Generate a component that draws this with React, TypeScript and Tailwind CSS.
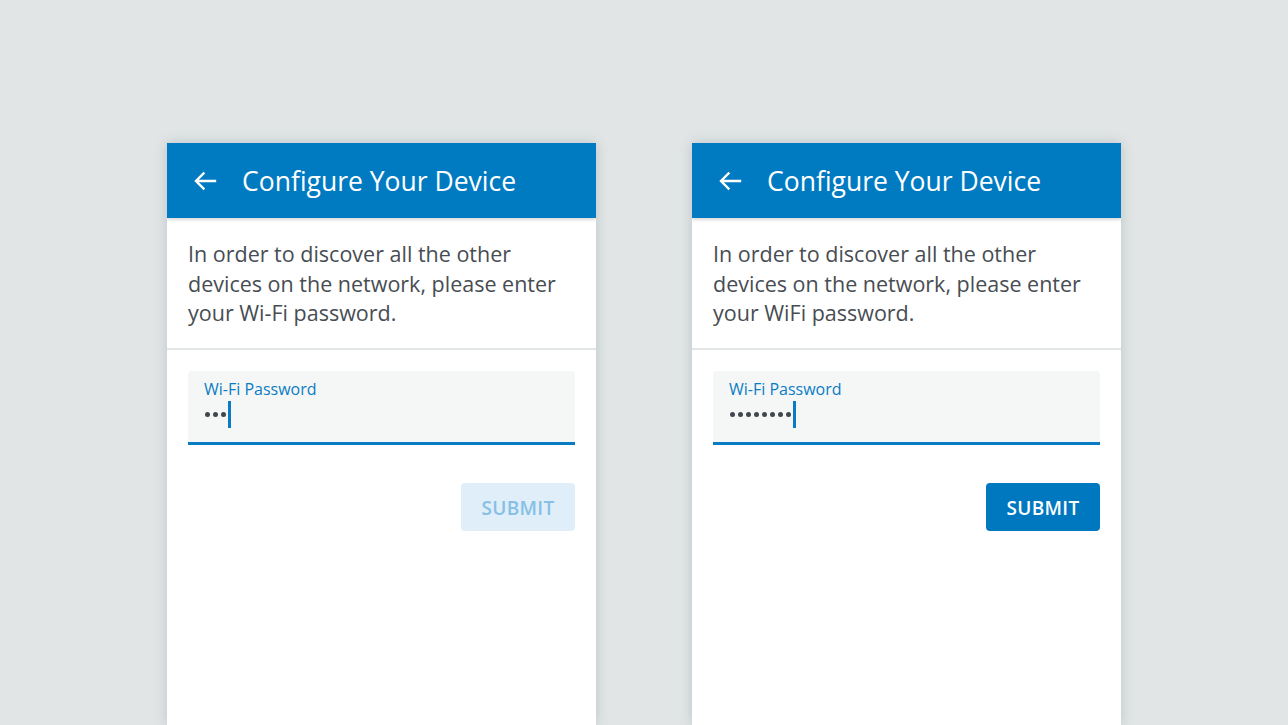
import React from 'react';

interface PhoneProps {
  body: string;
  dots: number;
  enabled: boolean;
}

const BackArrow: React.FC = () => (
  <svg width="24" height="20" viewBox="0 0 24 20" fill="none" className="shrink-0">
    <path d="M22 10H3.5M10.5 2.5L3 10l7.5 7.5" stroke="white" strokeWidth="2.4" strokeLinecap="square" />
  </svg>
);

const Phone: React.FC<PhoneProps> = ({ body, dots, enabled }) => {
  return (
    <div className="w-[429px] h-[582px] bg-white shadow-[0_0_12px_rgba(60,80,90,0.22)] flex flex-col overflow-hidden">
      <header className="h-[75px] bg-[#007bc2] flex items-center pl-[26px] shadow-[0_2px_3px_rgba(0,0,0,0.15)] relative z-10">
        <BackArrow />
        <h1 className="ml-[25px] pt-[2px] text-[26.5px] text-white">Configure Your Device</h1>
      </header>
      <div className="px-[21px] pt-[21px] pb-[20px] border-b-2 border-[#e3e6e7]">
        <p className="text-[21.5px] leading-[29.5px] text-[#474d53]">{body}</p>
      </div>
      <div className="px-[21px] pt-[21px] flex flex-col">
        <div className="h-[74px] bg-[#f5f7f7] rounded-t-[4px] border-b-[3px] border-[#0a7cc4] pl-[16px] pt-[8px]">
          <div className="text-[16px] leading-[20px] text-[#0a7cc4]">Wi-Fi Password</div>
          <div className="flex items-center h-[26px] mt-[3px]">
            <div className="flex gap-[3px] ml-[1px]">
              {Array.from({ length: dots }).map((_, i) => (
                <span key={i} className="w-[5px] h-[5px] rounded-full bg-[#41474d]" />
              ))}
            </div>
            <span className="ml-[2px] w-[3px] h-[27px] bg-[#0a7cc4]" />
          </div>
        </div>
        <div className="flex justify-end mt-[38px]">
          <button
            className={
              enabled
                ? 'w-[114px] h-[48px] pt-[3px] rounded-[4px] bg-[#0078bf] text-white text-[19px] font-semibold tracking-[0.3px]'
                : 'w-[114px] h-[48px] pt-[3px] rounded-[4px] bg-[#dfeef8] text-[#86c0e6] text-[19px] font-semibold tracking-[0.3px]'
            }
          >
            SUBMIT
          </button>
        </div>
      </div>
    </div>
  );
};

export default function App() {
  return (
    <div
      className="w-full h-[725px] bg-[#e1e5e6] flex justify-center gap-[96px] pt-[143px] overflow-hidden"
      style={{ fontFamily: '"Open Sans", "Noto Sans", sans-serif' }}
    >
      <Phone body="In order to discover all the other devices on the network, please enter your Wi-Fi password." dots={3} enabled={false} />
      <Phone body="In order to discover all the other devices on the network, please enter your WiFi password." dots={8} enabled={true} />
    </div>
  );
}
